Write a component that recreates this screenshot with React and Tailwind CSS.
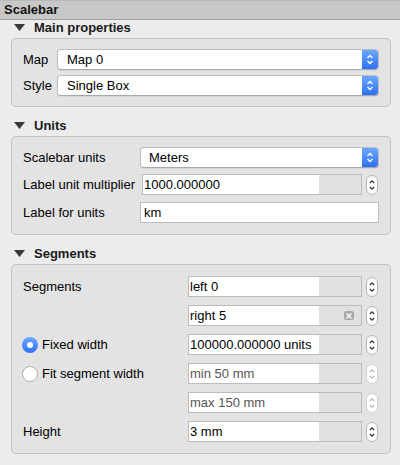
import React from "react";

const font = { fontFamily: '"Liberation Sans", Arial, sans-serif' };

function Triangle() {
    return (
        <svg width="11" height="7" viewBox="0 0 11 7" className="mr-[9px] ml-[14px]">
            <path d="M0 0 H11 L5.5 7 Z" fill="#3a3a3a" />
        </svg>
    );
}

function SectionHeader({ title }) {
    return (
        <div className="h-[14px] flex items-center">
            <Triangle />
            <span className="text-[13px] font-bold text-[#1a1a1a] leading-none">{title}</span>
        </div>
    );
}

function ComboBox({ value, pl = "pl-[9px]" }) {
    return (
        <div className="flex-1 h-[21px] flex rounded-[4px] bg-white border border-[#bdbdbd] border-b-[#a8a8a8] shadow-[0_1px_0_rgba(0,0,0,0.05)] overflow-hidden">
            <div className={`flex-1 flex items-center ${pl} text-[13px] text-black`}>{value}</div>
            <div className="w-[16px] flex items-center justify-center bg-gradient-to-b from-[#6aa8ff] to-[#2f6ff6]">
                <svg width="8" height="13" viewBox="0 0 8 13">
                    <path d="M1.5 5 L4 2.5 L6.5 5" fill="none" stroke="white" strokeWidth="1.4" />
                    <path d="M1.5 8 L4 10.5 L6.5 8" fill="none" stroke="white" strokeWidth="1.4" />
                </svg>
            </div>
        </div>
    );
}

function Spinner({ disabled }) {
    const c = disabled ? "#b8b8b8" : "#333";
    return (
        <div
            className={`ml-[4px] mr-[1px] w-[12px] h-[20px] rounded-full bg-white border flex items-center justify-center ${
                disabled ? "border-[#d2d2d2]" : "border-[#b5b5b5]"
            }`}
        >
            <svg width="8" height="14" viewBox="0 0 8 14">
                <path d="M1.8 5 L4 2.8 L6.2 5" fill="none" stroke={c} strokeWidth="1.2" />
                <path d="M1.8 9 L4 11.2 L6.2 9" fill="none" stroke={c} strokeWidth="1.2" />
            </svg>
        </div>
    );
}

function SpinBox({ value, clear, disabled }) {
    return (
        <div className="flex-1 flex items-center">
            <div className="flex-1 h-[21px] flex bg-white border border-[#bcbcbc]">
                <div
                    className={`flex-1 flex items-center pl-[1px] text-[13px] ${
                        disabled ? "text-[#555]" : "text-black"
                    }`}
                >
                    {value}
                </div>
                <div className="w-[42px] bg-[#e1e1e1] flex items-center justify-end pr-[7px]">
                    {clear && (
                        <div className="w-[10px] h-[9px] rounded-[2px] bg-[#a9a9a9] flex items-center justify-center">
                            <svg width="6" height="6" viewBox="0 0 6 6">
                                <path d="M0.5 0.5 L5.5 5.5 M5.5 0.5 L0.5 5.5" stroke="white" strokeWidth="1.4" />
                            </svg>
                        </div>
                    )}
                </div>
            </div>
            <Spinner disabled={disabled} />
        </div>
    );
}

function TextField({ value }) {
    return (
        <div className="flex-1 h-[21px] flex items-center bg-white border border-[#bcbcbc] pl-[3px] text-[13px] text-black">
            {value}
        </div>
    );
}

function Radio({ checked }) {
    if (checked) {
        return (
            <div className="w-[16px] h-[16px] rounded-full bg-gradient-to-b from-[#6aa8ff] to-[#2f6ff6] flex items-center justify-center">
                <div className="w-[6px] h-[6px] rounded-full bg-white" />
            </div>
        );
    }
    return <div className="w-[16px] h-[16px] rounded-full bg-white border border-[#b0b0b0]" />;
}

function Box({ children, pt = "pt-[10px]", pb = "pb-[10px]" }) {
    return (
        <div className={`mt-[4px] ml-[11px] mr-[9px] bg-[#e3e3e3] border border-[#c2c2c2] rounded-[5px] pl-[11px] pr-[11px] ${pt} ${pb} flex flex-col`}>
            {children}
        </div>
    );
}

export default function App() {
    return (
        <div className="w-[400px] h-[465px] bg-[#ececec] overflow-hidden" style={font}>
            {/* Title */}
            <div className="h-[20px] bg-[#c8c8c8] border-t border-[#b8b8b8] border-b border-b-[#9e9e9e] flex items-center pl-[4px]">
                <span className="text-[13px] font-bold text-[#111]">Scalebar</span>
            </div>

            {/* Main properties */}
            <SectionHeader title="Main properties" />
            <Box>
                <div className="flex items-center">
                    <span className="w-[34px] text-[13px] text-black">Map</span>
                    <ComboBox value="Map 0" />
                </div>
                <div className="flex items-center mt-[5px]">
                    <span className="w-[34px] text-[13px] text-black">Style</span>
                    <ComboBox value="Single Box" />
                </div>
            </Box>

            {/* Units */}
            <div className="mt-[11px]">
                <SectionHeader title="Units" />
            </div>
            <Box pb="pb-[11px]">
                <div className="flex items-center">
                    <span className="w-[117px] text-[13px] text-black">Scalebar units</span>
                    <ComboBox value="Meters" pl="pl-[8px]" />
                </div>
                <div className="flex items-center mt-[6px]">
                    <span className="w-[119px] text-[13px] text-black">Label unit multiplier</span>
                    <SpinBox value="1000.000000" />
                </div>
                <div className="flex items-center mt-[7px]">
                    <span className="w-[117px] text-[13px] text-black">Label for units</span>
                    <TextField value="km" />
                </div>
            </Box>

            {/* Segments */}
            <div className="mt-[11px]">
                <SectionHeader title="Segments" />
            </div>
            <Box pt="pt-[11px]" pb="pb-[11px]">
                <div className="flex flex-col gap-[8px]">
                    <div className="flex items-center">
                        <span className="w-[165px] text-[13px] text-black">Segments</span>
                        <SpinBox value="left 0" />
                    </div>
                    <div className="flex items-center">
                        <span className="w-[165px]" />
                        <SpinBox value="right 5" clear />
                    </div>
                    <div className="flex items-center">
                        <div className="w-[165px] flex items-center -ml-[1px] mr-[1px] gap-[4px]">
                            <Radio checked />
                            <span className="text-[13px] text-black">Fixed width</span>
                        </div>
                        <SpinBox value="100000.000000 units" />
                    </div>
                    <div className="flex items-center">
                        <div className="w-[165px] flex items-center -ml-[1px] mr-[1px] gap-[4px]">
                            <Radio />
                            <span className="text-[13px] text-black">Fit segment width</span>
                        </div>
                        <SpinBox value="min 50 mm" disabled />
                    </div>
                    <div className="flex items-center">
                        <span className="w-[165px]" />
                        <SpinBox value="max 150 mm" disabled />
                    </div>
                    <div className="flex items-center">
                        <span className="w-[165px] text-[13px] text-black">Height</span>
                        <SpinBox value="3 mm" />
                    </div>
                </div>
            </Box>
        </div>
    );
}
